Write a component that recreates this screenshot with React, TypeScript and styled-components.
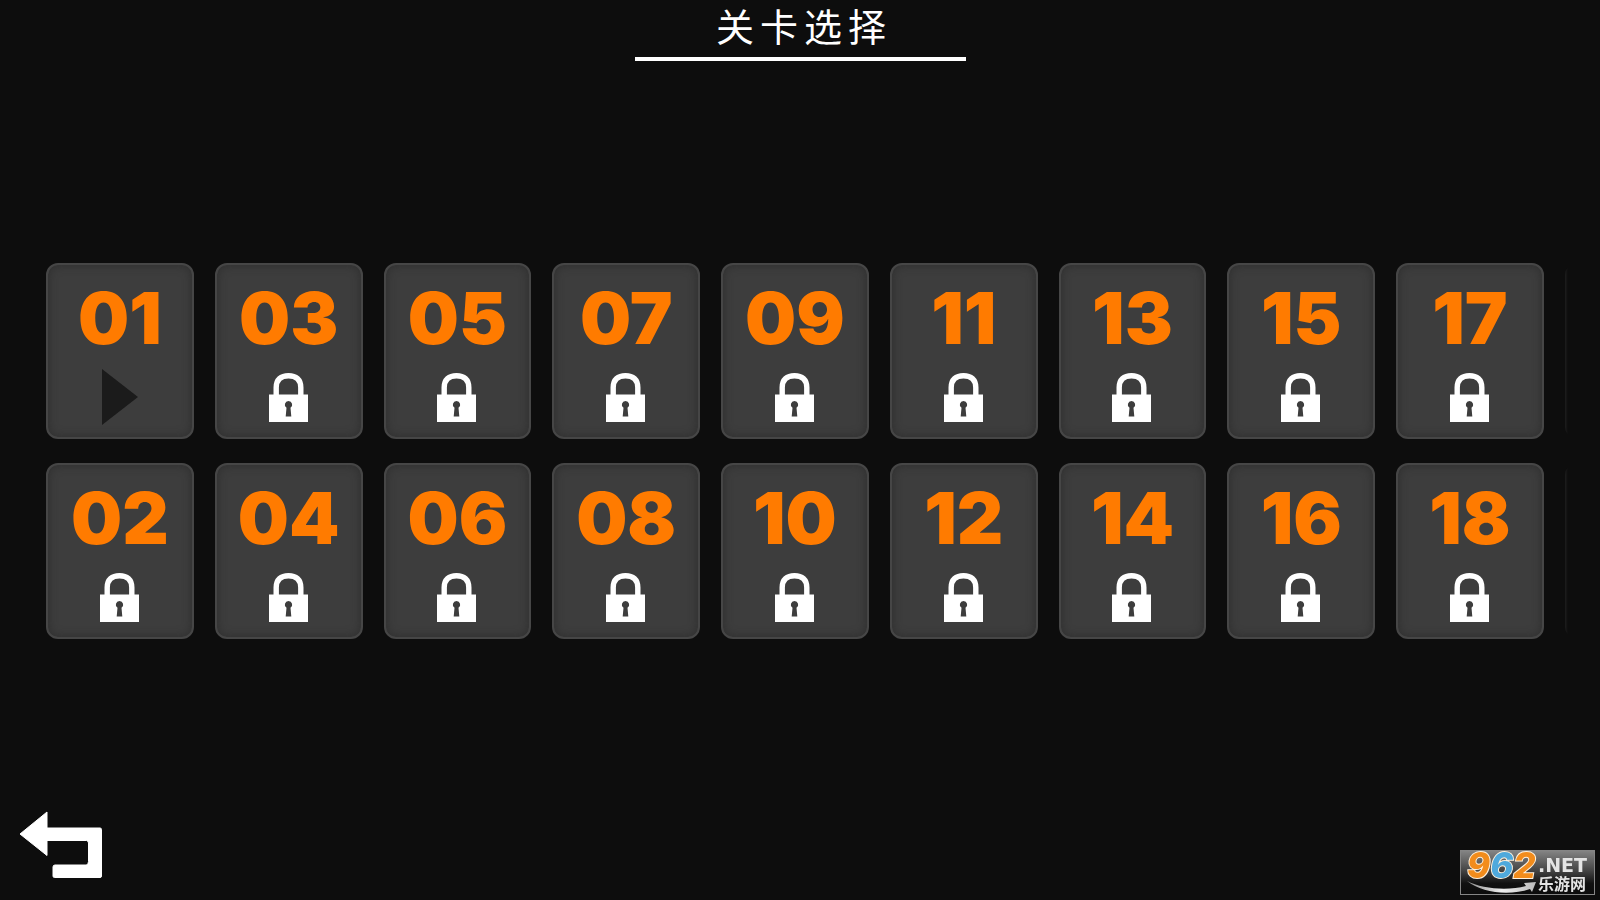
import React from "react";
import styled, { createGlobalStyle } from "styled-components";

const GlobalStyle = createGlobalStyle`
  * { box-sizing: border-box; }
  body {
    margin: 0;
    background: #0d0d0d;
    color: #fff;
    font-family: "Noto Sans", "Noto Sans CJK SC", sans-serif;
  }
`;

const Page = styled.div`
  display: grid;
  grid-template-columns: minmax(0, 1fr);
  grid-template-rows: 1fr auto 1fr;
  min-height: 100vh;
`;

const Header = styled.header`
  display: flex;
  justify-content: center;
  align-items: flex-start;
`;

const Title = styled.h1`
  margin: 0;
  min-width: 331px;
  height: 61px;
  padding-left: 8px;
  border-bottom: 4px solid #fff;
  font-family: "Noto Sans CJK SC", sans-serif;
  font-size: 38px;
  font-weight: 400;
  line-height: 50px;
  letter-spacing: 6px;
  text-align: center;
`;

const LevelGrid = styled.main`
  display: grid;
  grid-auto-flow: column;
  grid-template-rows: repeat(2, 176px);
  grid-auto-columns: calc((100% - 192px) / 9);
  gap: 24px 21px;
  margin: 2px 32px 0 46px;
  overflow: hidden;
  mask-image: linear-gradient(to left, transparent, #000 10px);
`;

const LevelCard = styled.button`
  display: flex;
  flex-direction: column;
  align-items: center;
  justify-content: space-between;
  padding: 26px 0 12px;
  border: 2px solid #464646;
  border-radius: 12px;
  background: #3d3d3d;
  box-shadow: inset 0 0 8px 1px #303030;
  color: #ff7b00;
  cursor: pointer;

  &:disabled { cursor: default; }
`;

const LevelNumber = styled.span`
  font-family: Inter, sans-serif;
  font-size: 72px;
  font-weight: 900;
  line-height: 54px;
`;

const IconBox = styled.span`
  display: flex;
  align-items: center;
  height: 56px;
`;

const Footer = styled.footer`
  display: flex;
  align-items: flex-end;
  padding: 0 19px 22px;
`;

const BackButton = styled.button`
  display: flex;
  padding: 0;
  border: 0;
  background: none;
  color: #fff;
  cursor: pointer;
`;

const SiteBadge = styled.a`
  position: fixed;
  right: 5px;
  bottom: 5px;
  display: flex;
`;

const LockIcon = () => (
  <svg width="40" height="49" viewBox="0 0 40 49" aria-hidden="true">
    <path
      d="M7.200 22V14.500C7.200 6.500 12 2.700 19.500 2.700S31.800 6.500 31.800 14.500V22"
      fill="none"
      stroke="#fff"
      strokeWidth="5.400"
    />
    <path d="M0 21.500H39V49H0Z" fill="#fff" />
    <path
      d="M19.500 28a3.700 3.700 0 0 1 2 6.800L22.300 43.500H16.700L17.500 34.800A3.700 3.700 0 0 1 19.500 28Z"
      fill="#3d3d3d"
    />
  </svg>
);

const PlayIcon = () => (
  <svg width="36" height="56" viewBox="0 0 36 56" aria-hidden="true">
    <path d="M0 0L36 28L0 56Z" fill="#1b1b1b" />
  </svg>
);

const BackIcon = () => (
  <svg width="83" height="67" viewBox="0 0 83 67" aria-hidden="true">
    <path
      d="M28 1V17H81Q82.500 17 82.500 18.500V65Q82.500 66.500 81 66.500H35.500Q34 66.500 34 65V56Q34 54 36 54H67.500Q69.500 52.500 69.500 50.500V32Q69.500 30 67.500 29.500H28V44.500L1 23Z"
      fill="currentColor"
      stroke="currentColor"
      strokeWidth="1"
      strokeLinejoin="round"
    />
  </svg>
);

const SiteLogo = () => (
  <svg
    width="135"
    height="45"
    viewBox="0 0 135 45"
    overflow="visible"
    role="img"
    aria-label="962.NET 乐游网"
  >
    <defs>
      <linearGradient id="plate" x1="0" y1="0" x2="0" y2="1">
        <stop offset="0" stopColor="#858585" />
        <stop offset="0.450" stopColor="#454545" />
        <stop offset="0.750" stopColor="#111" />
        <stop offset="1" stopColor="#0b0b0b" />
      </linearGradient>
      <linearGradient id="swoosh" x1="0" y1="0" x2="1" y2="0">
        <stop offset="0" stopColor="#888" />
        <stop offset="0.500" stopColor="#eee" />
        <stop offset="1" stopColor="#bbb" />
      </linearGradient>
    </defs>
    <rect x="0.500" y="0.500" width="134" height="44" fill="url(#plate)" stroke="#858585" />
    <path
      d="M7 31C22 39 48 41 66 36L64 33L76 32L72 42L70 39C49 46 22 43 7 31Z"
      fill="url(#swoosh)"
    />
    <text
      x="7"
      y="28"
      fontFamily="Inter, sans-serif"
      fontSize="35"
      fontWeight="800"
      fontStyle="italic"
      stroke="#fff2df"
      strokeWidth="2"
      paintOrder="stroke"
      fill="#f28c1c"
    >
      9<tspan fill="#4fa9dc">6</tspan>2
    </text>
    <text
      x="78"
      y="22"
      fontFamily="DejaVu Sans, sans-serif"
      fontSize="19"
      fontWeight="700"
      fill="#e4e4e4"
    >
      .NET
    </text>
    <text
      x="78"
      y="40"
      fontFamily="Noto Sans CJK SC, sans-serif"
      fontSize="16"
      fontWeight="700"
      fill="#e4e4e4"
    >
      乐游网
    </text>
  </svg>
);

const levels = Array.from({ length: 18 }, (_, i) => ({
  label: String(i + 1).padStart(2, "0"),
  locked: i > 0,
}));

export default function App() {
  return (
    <>
      <GlobalStyle />
      <Page>
        <Header>
          <Title>关卡选择</Title>
        </Header>
        <LevelGrid>
          {levels.map(({ label, locked }) => (
            <LevelCard key={label} type="button" disabled={locked}>
              <LevelNumber>{label}</LevelNumber>
              <IconBox>{locked ? <LockIcon /> : <PlayIcon />}</IconBox>
            </LevelCard>
          ))}
          <LevelCard type="button" disabled />
          <LevelCard type="button" disabled />
        </LevelGrid>
        <Footer>
          <BackButton type="button" aria-label="返回">
            <BackIcon />
          </BackButton>
        </Footer>
      </Page>
      <SiteBadge href="#">
        <SiteLogo />
      </SiteBadge>
    </>
  );
}
